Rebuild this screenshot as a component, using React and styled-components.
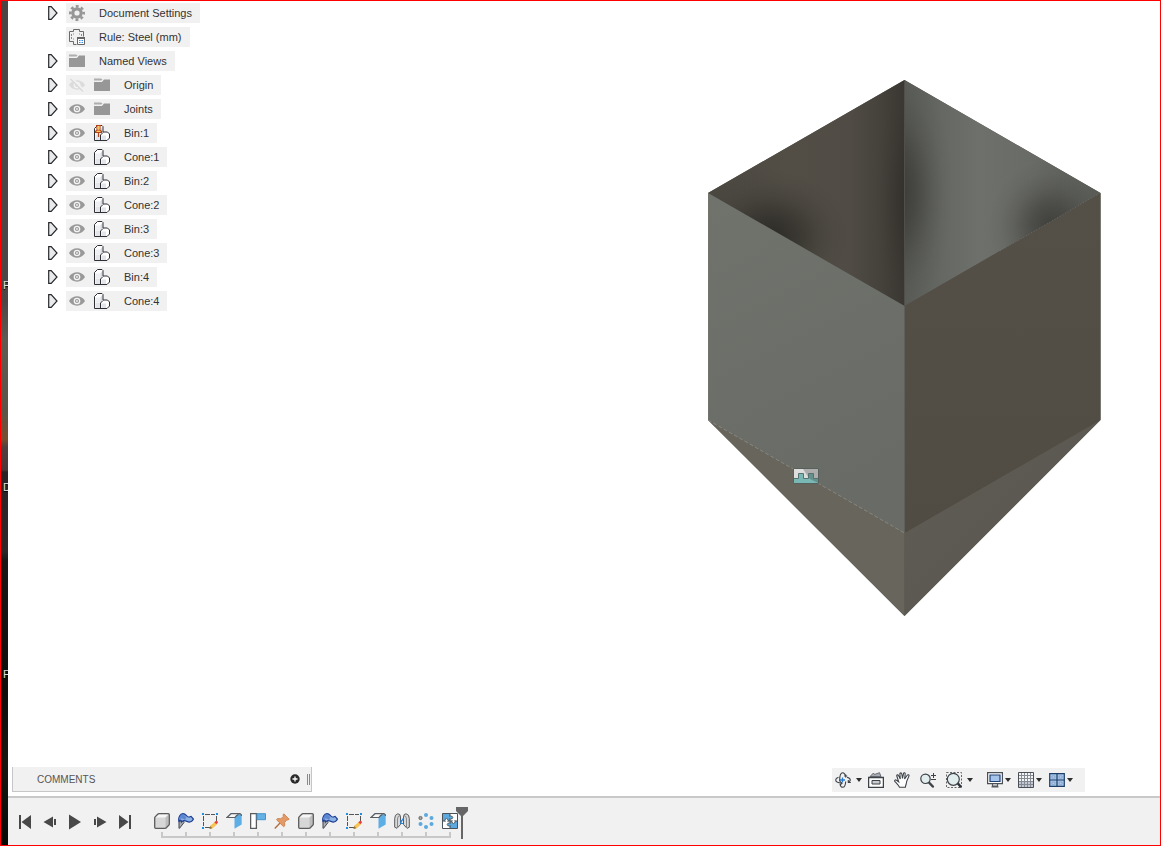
import React, { useState } from "react";
import styled, { createGlobalStyle } from "styled-components";

const TREE = [
    { label: 'Document Settings', icon: 'gear', expandable: true },
    { label: 'Rule: Steel (mm)', icon: 'rule' },
    { label: 'Named Views', icon: 'folder', expandable: true },
    { label: 'Origin', icon: 'folder', expandable: true, eye: 'hidden' },
    { label: 'Joints', icon: 'folder', expandable: true, eye: 'visible' },
    { label: 'Bin:1', icon: 'grounded', expandable: true, eye: 'visible' },
    { label: 'Cone:1', icon: 'component', expandable: true, eye: 'visible' },
    { label: 'Bin:2', icon: 'component', expandable: true, eye: 'visible' },
    { label: 'Cone:2', icon: 'component', expandable: true, eye: 'visible' },
    { label: 'Bin:3', icon: 'component', expandable: true, eye: 'visible' },
    { label: 'Cone:3', icon: 'component', expandable: true, eye: 'visible' },
    { label: 'Bin:4', icon: 'component', expandable: true, eye: 'visible' },
    { label: 'Cone:4', icon: 'component', expandable: true, eye: 'visible' },
];

const PLAYER = [
    { label: 'Go to start', icon: 'first' },
    { label: 'Step back', icon: 'back' },
    { label: 'Play', icon: 'play' },
    { label: 'Step forward', icon: 'forward' },
    { label: 'Go to end', icon: 'last' },
];

const FEATURES = [
    'box', 'sheet', 'sketch', 'flange', 'unfold', 'pin', 'box',
    'sheet', 'sketch', 'flange', 'joint', 'pattern', 'puzzle',
];

const NAV = [
    { label: 'Orbit', icon: 'orbit', menu: true, gap: 5, after: 6 },
    { label: 'Look At', icon: 'lookAt', after: 10 },
    { label: 'Pan', icon: 'hand', after: 10 },
    { label: 'Zoom', icon: 'zoom', after: 10 },
    { label: 'Fit', icon: 'fit', menu: true, gap: 5, after: 14 },
    { label: 'Display Settings', icon: 'monitor', menu: true, gap: 2, after: 7 },
    { label: 'Grid and Snaps', icon: 'grid', menu: true, gap: 2, after: 7 },
    { label: 'Viewports', icon: 'viewports', menu: true, gap: 2, after: 0 },
];

const blocks = (
    <>
        <path d="M.5 15.5V4L3.5.5h5l.5 1V7h4.5l2 2v4L13 15.5z" fill="#fff" />
        <path d="M1.500 9.500H6V15H1.500zM7.500 10.500H12V15H7.500z" fill="#e3e5ea" />
        <path d="M1.500 4.500H6V9H1.500z" fill="#eeeff2" />
        <path d="M6.500 4.500l2-3V7l-2 2.500z" fill="#d3d6dd" />
        <path d="M.5 15.500V3.500L3.500.5h4.500l1 1V7h4.500l2 2v4L13 15.500zM6.500 15.500V10L9 7.500" fill="none" stroke="#2e3036" />
    </>
);

const ICONS = {
    gear: (
        <g fill="none" stroke="#969696">
            <circle cx="8" cy="8" r="4.200" strokeWidth="3.200" />
            <circle cx="8" cy="8" r="6.700" strokeWidth="2.600" strokeDasharray="2.860 2.400" strokeDashoffset="1.430" />
        </g>
    ),
    rule: (
        <g fill="none" stroke="#6b6b6b">
            <path d="M7.500 15.500h-3v-3h-4v-10h4v-2h6v2h4v5" />
            <path d="M4.500 4.500v1M4.500 9.500v1M10.500 4.500v1M2.500 5v5M12.500 5v2" stroke="#8a8a8a" strokeDasharray="2 1" />
            <path d="M8.500 8.500h7v7h-7z" fill="#fff" stroke="#666" />
            <path d="M8 9h8" stroke="#666" strokeWidth="2" />
            <path d="M10 11.500h1.500M12.500 11.500H14M10 13.500h1.500M12.500 13.500H14" stroke="#2f8ede" />
        </g>
    ),
    folder: (
        <g fill="#979797">
            <path d="M0 1.500h7l1.500 1-1 1H0z" opacity=".75" />
            <path d="M0 5h8l2-2.500h6V14H0z" />
        </g>
    ),
    visible: (
        <>
            <path d="M0 8C3.500 1.800 12.500 1.800 16 8 12.500 14.200 3.500 14.200 0 8z" fill="#999" />
            <circle cx="8" cy="8" r="2.700" fill="#999" stroke="#f4f4f4" strokeWidth="1.300" />
            <circle cx="8" cy="8" r=".9" fill="#f4f4f4" />
        </>
    ),
    hidden: (
        <>
            <path d="M0 8C3.500 1.800 12.500 1.800 16 8 12.500 14.200 3.500 14.200 0 8z" fill="#dcdcdc" />
            <circle cx="8" cy="8" r="2.700" fill="#dcdcdc" stroke="#f4f4f4" strokeWidth="1.300" />
            <path d="M2 1l13 13" stroke="#f1f1f1" strokeWidth="3" />
            <path d="M1.500 2l12.500 12.500" stroke="#d8d8d8" strokeWidth="1.300" />
        </>
    ),
    component: blocks,
    grounded: (
        <>
            {blocks}
            <path d="M2 .5h5M3 1v3.500M6 1v3.500M1.500 7.500v-1L3 5h3l1.500 1.500v1z" fill="#ffc65c" stroke="#b3431a" strokeWidth="1.200" />
            <path d="M3.600 1.200h1.800v3.300H3.600z" fill="#ffc65c" />
            <path d="M4.500 8v4" stroke="#b3431a" strokeWidth="1.200" />
        </>
    ),
    first: <path d="M2 1h2v14H2zM14 1v14L4.500 8z" />,
    back: <path d="M11 2.500v11L1.500 8zM12 5h2v6h-2z" />,
    play: <path d="M2 .5v15L14 8z" />,
    forward: <path d="M5 2.500v11L14.500 8zM2 5h2v6H2z" />,
    last: <path d="M12 1h2v14h-2zM2 1v14l9.500-7z" />,
    box: (
        <>
            <path d="M.7 4.700L4.500.7h10.800v10.600l-4 4H.7z" fill="#d7d7d7" />
            <path d="M1.500 4.500L4.700 1.300h9.800l-3.200 3.200z" fill="#f6f6f6" />
            <path d="M11.500 4.800l3.200-3.300v9.700l-3.200 3.300z" fill="#bdbdbd" />
            <path d="M.7 5q0-.8.6-1.400L3.700 1.300Q4.300.7 5 .7h9.300q1 0 1 1V11q0 .7-.6 1.300l-2.400 2.400q-.6.6-1.300.6H1.700q-1 0-1-1z" fill="none" stroke="#5b5b5b" strokeWidth="1.300" />
        </>
    ),
    sheet: (
        <>
            <path d="M1 8.500L5.500 7.500 6 9.500 1.500 15.300H1z" fill="#a9adb4" stroke="#41454d" />
            <path d="M.8 8C.3 4 2 .9 5 .7c3 0 3.500 2.800 5.500 3.300 1 .2 1.700-.6 2.500-.6L15.500 6c-1.500 2.800-4 3.600-6.500 2.400C7 7.300 5 7 3.500 9 3.500 7 2 6.500.8 8z" fill="#8fb2e6" stroke="#1d3f92" strokeWidth="1.200" />
            <path d="M1.500 6C1.500 3 3 1.500 5 1.500c2 .2 2.500 2 3.500 3L7 7C5.500 5.500 3.500 5 1.500 6z" fill="#5c86d2" />
        </>
    ),
    sketch: (
        <>
            <path d="M3 1.500h10M1.500 3v10M14.500 3v6M3 14.500h5" stroke="#555" strokeDasharray="5 1" />
            <path d="M0 0h2v2H0zM14 0h2v2h-2zM0 14h2v2H0z" fill="#1a8fe8" />
            <path d="M7.500 16l.8-3.200 4.400-3.900 2.300 2.300-4.300 4z" fill="#f7c450" />
            <path d="M7.500 16l.8-3 1.900 2.200z" fill="#8b6d40" />
            <path d="M12.300 9.200l1.500-1.300q1-.5 1.700.3t.3 1.600l-1.400 1.400z" fill="#e8413e" />
        </>
    ),
    flange: (
        <>
            <path d="M1 4.500L5 .7h9L9.500 4.500z" fill="#f7f7f7" />
            <path d="M8.500 5.500Q10 2 13 1q2.700-.5 2.700 2v8.500L8.500 15.800z" fill="#5eaee6" />
            <path d="M15.500 3Q15.500.7 13.500.7H5L1 4.500h8Q10 2.500 12.500 1.500" fill="none" stroke="#5a5f64" strokeWidth="1.200" />
        </>
    ),
    unfold: (
        <>
            <path d="M.6 .7h5.800v14.600H.6z" fill="#fff" stroke="#5b5b5b" strokeWidth="1.300" />
            <path d="M7 .7h8.500v6H7z" fill="#65b1e6" stroke="#4494cc" />
        </>
    ),
    pin: (
        <>
            <path d="M.8 15.500L6 10" stroke="#b46a3c" strokeWidth="1.300" />
            <path d="M9.800.8l5.400 5.400-1.400.9-.9-.3-2.300 2.700.2 3.200-1.200 1L2.500 6.700l1-1.200 3.300.2 2.700-2.300-.5-1.400z" fill="#e39a66" stroke="#c87a45" strokeWidth=".8" />
        </>
    ),
    joint: (
        <>
            <path d="M.7 5.500Q.7 1.500 3.800.8 6.500.8 6.500 4v7.500L3 15.300.7 14.200z" fill="#d9d9d9" stroke="#5b5b5b" />
            <path d="M9.500 4Q9.500.8 12 .8q3.300.5 3.300 4.700v8.700L13 15.300l-3.500-3.800z" fill="#d9d9d9" stroke="#5b5b5b" />
            <path d="M3.500 15V6Q3.500 3 6 2.500M12.500 15V6q0-3-2.500-3.500" fill="none" stroke="#888" />
            <path d="M6.500 10l3-5M7 7v3.500h2" fill="none" stroke="#2186dd" strokeWidth="1.200" />
        </>
    ),
    pattern: (
        <g fill="#5ba9de">
            <circle cx="8" cy="2" r="2" />
            <circle cx="13.500" cy="5" r="2" />
            <circle cx="13.500" cy="11" r="2" />
            <circle cx="8" cy="14" r="2" />
            <circle cx="2.500" cy="11" r="2" />
            <circle cx="2.500" cy="5" r="1.600" fill="#a5a5a5" stroke="#666" />
        </g>
    ),
    puzzle: (
        <>
            <path d="M.5.500h15v15H.5z" fill="#fff" />
            <path d="M.5.500H8V8H.5zM8 8h7.500v7.500H8z" fill="#5ba9de" />
            <path d="M.5.500h15v15H.5zM8 .5v15M.5 8h15" fill="none" stroke="#4c5257" />
            <g stroke="#4c5257" strokeWidth=".9">
                <path d="M7.500 3h1q2.300 0 2.300 1.500T8.500 6h-1zM8.500 10h-1q-2.300 0-2.300 1.500T7.500 13h1z" fill="#5ba9de" />
                <path d="M3 8.500v-1q0-2 1.500-2T6 7.500v1zM10 7.500v1q0 2 1.500 2T13 8.500v-1z" fill="#fff" />
            </g>
            <path d="M7 3.500h1.500v2H7zM7.500 10.500H9v2H7.500z" fill="#5ba9de" />
            <path d="M3.500 7.500h2V9h-2zM10.500 7h2v1.500h-2z" fill="#fff" />
        </>
    ),
    orbit: (
        <g fill="none" stroke="#3d4248" strokeWidth="1.100">
            <path d="M4.700 9.500V8C4.700 3.500 5.700.7 7.700.7c1.300 0 2.300 1.200 2.800 3.200M10.700 9.500c-.2 3.500-1.300 5.800-3 5.800-1.300 0-2.200-1-2.700-3" />
            <path d="M3.500 5.300C1.700 5.900.7 6.900.7 8c0 1.800 2.500 3 6 3.200M12 5.300c2.200.6 3.300 1.500 3.300 2.700 0 .8-.6 1.500-1.800 2.100" />
            <path d="M5 9.500l2 1.700-2 1.800M13.300 8v2.500h2.500" />
            <path d="M7.500 5.500v5M5 8h5" stroke="#2879d0" strokeWidth="1.300" />
            <path d="M10.700 2.500v3M9.200 4h3" />
        </g>
    ),
    lookAt: (
        <>
            <path d="M2 4.500L5.500 1l1 1.500L11.500.7l1.500 4z" fill="#a9adb3" stroke="#666c73" />
            <path d="M.6 5.500h14.800v9.900H.6z" fill="#fff" stroke="#3d4248" strokeWidth="1.300" />
            <path d="M4 8.500h8V12H4z" fill="#c9ccd0" stroke="#3d4248" />
        </>
    ),
    hand: (
        <path
            d="M5.500 15.300C4.500 12.800 2.300 11 .8 9.300c-.6-1 .6-1.900 1.700-1l2.200 1.500L2.800 4c-.3-1.300 1.200-1.700 1.700-.5L6.300 7 5.900 2c0-1.500 1.600-1.500 1.900 0l.7 4.500L9.500 1.600c.3-1.300 1.800-1 1.700.4l-.6 5 2.600-3.700c.8-1.100 2.200-.5 1.700.8l-2.200 5.200c-.2 2.500-1 3.400-1.400 6z"
            fill="#fff" stroke="#3d4248" strokeWidth="1.100"
        />
    ),
    zoom: (
        <>
            <path d="M8.500 10l4.300 4.500" stroke="#3d4248" strokeWidth="2.500" strokeLinecap="round" />
            <circle cx="5.500" cy="6.800" r="4.700" fill="#e2eeee" stroke="#3d4248" strokeWidth="1.200" />
            <path d="M11 3.500h5M13.500 1v5M11 7.500h5" stroke="#3d4248" />
        </>
    ),
    fit: (
        <>
            <path d="M.5.500h15v15H.5z" fill="none" stroke="#666" strokeDasharray="2 1.500" />
            <path d="M11.500 11l3 3.500" stroke="#2e3338" strokeWidth="2.500" strokeLinecap="round" />
            <circle cx="7.300" cy="7.300" r="6" fill="#e2eeee" stroke="#3d4248" strokeWidth="1.200" />
        </>
    ),
    monitor: (
        <>
            <path d="M.6.700h14.800v11H.6z" fill="#fff" stroke="#4a4f55" strokeWidth="1.200" />
            <path d="M3 3h10v6.500H3z" fill="#a5c4ea" stroke="#1f3f77" strokeWidth="1.200" />
            <path d="M5.500 12v2h5v-2M4.500 14.900h7" fill="none" stroke="#555a60" strokeWidth="1.200" />
        </>
    ),
    grid: (
        <>
            <path d="M.5.500h15v15H.5z" fill="#f4f5f7" />
            <path d="M.5 9h15v6.500H.5z" fill="#c3c8d4" />
            <path d="M3.500 0v16M6.500 0v16M9.500 0v16M12.500 0v16M0 3.500h16M0 6.500h16M0 9.500h16M0 12.500h16" stroke="#858a93" />
            <path d="M.5.500h15v15H.5z" fill="none" stroke="#4a4f55" />
        </>
    ),
    viewports: (
        <>
            <path d="M.7 1.700h14.600v12.600H.7z" fill="#a5c4ea" stroke="#1f3f66" strokeWidth="1.200" />
            <path d="M8 1.500v13M.5 8h15" stroke="#1f3f66" strokeWidth="1.200" />
            <path d="M3 4h2.800v2H3zM10.200 4H13v2h-2.800zM3 10.200h2.800v2H3zM10.200 10.200H13v2h-2.800z" fill="#c9dcf4" stroke="#7f9dc4" strokeWidth=".8" />
        </>
    ),
};

const Icon = ({ name }) => (
    <Glyph viewBox="0 0 16 16" aria-hidden="true">{ICONS[name]}</Glyph>
)

const TreeRow = ({ item }) => {
    const [ visible, setVisible ] = useState(item.eye === 'visible');

    return (
        <Row>
            { item.expandable ?
                <Expander aria-label={`Expand ${item.label}`}>
                    <svg width="10" height="14" viewBox="0 0 10 14" aria-hidden="true">
                        <path d="M.7.700h2.500L9 7l-5.800 6.300H.7z" fill="#e9eaec" stroke="#26282b" strokeWidth="1.200" />
                    </svg>
                </Expander>
                : <ExpanderSpace />
            }
            <Node>
                { item.eye &&
                    <EyeButton
                        aria-label={`Toggle ${item.label}`}
                        aria-pressed={visible}
                        onClick={() => setVisible(!visible)}
                    >
                        <Icon name={visible ? 'visible' : 'hidden'} />
                    </EyeButton>
                }
                <Icon name={item.icon} />
                <NodeLabel>{item.label}</NodeLabel>
            </Node>
        </Row>
    )
}

const BinModel = () => (
    <Model viewBox="708 79 393 538" role="img" aria-label="Bin with cone">
        <defs>
            <linearGradient id="backLeft" x1="0" x2="1" y1="0" y2="0">
                <stop offset="0" stopColor="#4a4740" />
                <stop offset=".4" stopColor="#524e46" />
                <stop offset=".72" stopColor="#504c45" />
                <stop offset=".88" stopColor="#45413b" />
                <stop offset="1" stopColor="#3a3631" />
            </linearGradient>
            <linearGradient id="backRight" x1="0" x2="1" y1="0" y2="0">
                <stop offset="0" stopColor="#595b56" />
                <stop offset=".2" stopColor="#666863" />
                <stop offset=".38" stopColor="#6e706b" />
                <stop offset=".65" stopColor="#696b66" />
                <stop offset="1" stopColor="#5a5c57" />
            </linearGradient>
            <radialGradient id="shade">
                <stop offset="0" stopColor="#22211e" stopOpacity=".75" />
                <stop offset=".3" stopColor="#22211e" stopOpacity=".52" />
                <stop offset=".6" stopColor="#22211e" stopOpacity=".2" />
                <stop offset=".8" stopColor="#22211e" stopOpacity=".06" />
                <stop offset="1" stopColor="#22211e" stopOpacity="0" />
            </radialGradient>
            <linearGradient id="frontLeft" x1="0" x2=".3" y1="0" y2="1">
                <stop offset="0" stopColor="#70726c" />
                <stop offset="1" stopColor="#696b66" />
            </linearGradient>
            <linearGradient id="frontRight" x1="0" x2="0" y1="0" y2="1">
                <stop offset="0" stopColor="#544f47" />
                <stop offset="1" stopColor="#504c44" />
            </linearGradient>
            <linearGradient id="coneRight" x1="0" x2=".5" y1="0" y2=".5">
                <stop offset="0" stopColor="#605d55" />
                <stop offset="1" stopColor="#5c5952" />
            </linearGradient>
            <clipPath id="clipLeft"><path d="M708 193L904.500 80v226z" /></clipPath>
            <clipPath id="clipRight"><path d="M904.500 80l196 113-196 113z" /></clipPath>
        </defs>
        <path d="M708 193L904.500 80l196 113v227l-196 196L708 420z" fill="#59564e" />
        <path d="M708 193L904.500 80v226z" fill="url(#backLeft)" />
        <g clipPath="url(#clipLeft)">
            <ellipse cx="772" cy="236" rx="78" ry="66" fill="url(#shade)" />
            <ellipse cx="908" cy="200" rx="36" ry="110" fill="url(#shade)" opacity=".35" />
        </g>
        <path d="M904.500 80l196 113-196 113z" fill="url(#backRight)" />
        <g clipPath="url(#clipRight)">
            <ellipse cx="900" cy="192" rx="54" ry="120" fill="url(#shade)" opacity=".7" />
            <ellipse cx="1050" cy="226" rx="62" ry="66" fill="url(#shade)" opacity=".75" />
        </g>
        <path d="M708 420l196.500 113v83z" fill="#68655d" />
        <path d="M1100.500 420l-196 113v83z" fill="url(#coneRight)" />
        <path d="M708 193l196.500 113v227L708 420z" fill="url(#frontLeft)" />
        <path d="M1100.500 193l-196 113v227l196-113z" fill="url(#frontRight)" />
        <path d="M904.500 306v227" stroke="#5f605a" />
        <path d="M904.500 80v226" stroke="#514f49" />
        <path d="M708 420l196.500 113" stroke="#96938a" strokeDasharray="4 2" strokeWidth=".7" />
        <path d="M1000 251l100-58" stroke="#7a7a73" strokeDasharray="1 2" strokeWidth=".6" />
        <path d="M708.500 193v227M1100.500 193v227" stroke="#77776f" strokeWidth=".6" />
        <path d="M793.500 468.500h25v15h-25z" fill="#dedede" />
        <path d="M803 469h15v14h-6z" fill="#adadad" />
        <path d="M794 478.500h4.500v-5h5v5h5v-5h5v5h4.500v4.500h-24z" fill="#79b8b5" />
        <path d="M809 478.500v-5h4.500v5h4.500v4.500z" fill="#64918d" />
        <path d="M794 478.500h4.500v-5h5v5h5v-5h5v5h4.500" fill="none" stroke="#56716e" />
        <path d="M793.500 468.500h25v15h-25z" fill="none" stroke="#57605a" />
    </Model>
)

const App = () => {
    return (
        <>
            <GlobalStyle />
            <Frame>
                <DesktopEdge>
                    <DesktopText>F</DesktopText>
                    <DesktopText>D</DesktopText>
                    <DesktopText>F</DesktopText>
                </DesktopEdge>
                <Workspace>
                    <Stage>
                        <Browser>
                            { TREE.map((item) => <TreeRow key={item.label} item={item} />) }
                        </Browser>
                        <Canvas>
                            <BinModel />
                        </Canvas>
                    </Stage>
                    <Dock>
                        <Comments>
                            <CommentsTitle>COMMENTS</CommentsTitle>
                            <AddButton aria-label="Add comment">
                                <svg width="10" height="10" viewBox="0 0 10 10" aria-hidden="true">
                                    <circle cx="5" cy="5" r="4.700" fill="#2a2a2a" />
                                    <path d="M5 2.500v5M2.500 5h5" stroke="#fff" strokeWidth="1.300" />
                                </svg>
                            </AddButton>
                            <Grip />
                        </Comments>
                        <NavBar>
                            { NAV.map(({ label, icon, menu, gap, after }) => (
                                <NavButton key={label} aria-label={label} $gap={gap} $after={after}>
                                    <Icon name={icon} />
                                    { menu &&
                                        <svg width="6" height="4" viewBox="0 0 6 4" aria-hidden="true">
                                            <path d="M0 0h6L3 4z" fill="#2d2d2d" />
                                        </svg>
                                    }
                                </NavButton>
                            ))}
                        </NavBar>
                    </Dock>
                    <Timeline>
                        <Player>
                            { PLAYER.map(({ label, icon }) => (
                                <PlayerButton key={label} aria-label={label}>
                                    <Icon name={icon} />
                                </PlayerButton>
                            ))}
                        </Player>
                        <History>
                            <FeatureList>
                                { FEATURES.map((name, i) => (
                                    <FeatureButton key={i} aria-label={name}>
                                        <Icon name={name} />
                                    </FeatureButton>
                                ))}
                            </FeatureList>
                            <Track>
                                { FEATURES.map((name, i) => <Tick key={i} />) }
                            </Track>
                        </History>
                        <Marker viewBox="0 0 12 32" aria-hidden="true">
                            <path d="M0 0h12v4L7 9v23H5V9L0 4z" fill="#666" />
                        </Marker>
                    </Timeline>
                </Workspace>
            </Frame>
        </>
    )
}

export default App;


const GlobalStyle = createGlobalStyle`
    * {
        box-sizing: border-box;
    }

    body {
        margin: 0;
        background: #fff;
        font-family: "Liberation Sans", Arial, sans-serif;
        font-size: 11px;
        color: #333;
    }

    button {
        border: 0;
        padding: 0;
        background: none;
        font: inherit;
        color: inherit;
        cursor: pointer;
    }
`

const Frame = styled.div`
    display: flex;
    min-height: 100vh;
    border: 1px solid #f00;
`

const DesktopEdge = styled.aside`
    flex: none;
    display: grid;
    grid-template-rows: 202px 187px 24px;
    align-content: start;
    width: 7px;
    padding: 276px 0 0 2px;
    overflow: hidden;
    background: linear-gradient(
        #4a4444 0, #4d4647 300px, #5e5c52 340px, #5a5448 410px,
        #7a4e30 438px, #53403d 446px, #4a3838 469px, #2c2226 471px,
        #2e2729 550px, #171716 560px, #0d0d0a 690px, #15170f 760px, #070906 100%
    );
`

const DesktopText = styled.span`
    line-height: 16px;
    color: #e0e0e0;
    text-shadow: 0 1px 1px #000;
`

const Workspace = styled.main`
    flex: 1;
    min-width: 0;
    display: flex;
    flex-direction: column;
`

const Stage = styled.div`
    flex: 1;
    display: flex;
    justify-content: space-between;
`

const Browser = styled.ul`
    list-style: none;
    margin: 0;
    padding: 0 0 0 40px;
`

const Row = styled.li`
    display: flex;
    align-items: center;
    height: 24px;
`

const Expander = styled.button`
    display: flex;
    width: 18px;
`

const ExpanderSpace = styled.span`
    width: 18px;
`

const Node = styled.div`
    display: flex;
    align-items: center;
    gap: 9px;
    height: 20px;
    padding: 0 8px 0 3px;
    background: #f1f1f1;
`

const EyeButton = styled.button`
    display: flex;
`

const NodeLabel = styled.span`
    padding-left: 5px;
    line-height: 20px;
    white-space: nowrap;
`

const Glyph = styled.svg`
    flex: none;
    display: block;
    width: 16px;
    height: 16px;
`

const Canvas = styled.div`
    padding: 78px 59px 0 0;
`

const Model = styled.svg`
    display: block;
    width: 393px;
    height: 538px;
`

const Dock = styled.div`
    display: flex;
    justify-content: space-between;
    align-items: flex-end;
    padding: 0 75px 4px 4px;
`

const Comments = styled.section`
    display: flex;
    align-items: center;
    width: 300px;
    height: 25px;
    padding-left: 24px;
    background: #f1f1f1;
    border: solid #c6c6c6;
    border-width: 0 1px 1px;
`

const CommentsTitle = styled.span`
    flex: 1;
    font-size: 10px;
    color: #555;
`

const AddButton = styled.button`
    display: flex;
    margin-right: 7px;
`

const Grip = styled.span`
    width: 3px;
    height: 11px;
    margin-right: 1px;
    border: solid #888;
    border-width: 0 1px;
`

const NavBar = styled.nav`
    display: flex;
    align-items: center;
    height: 24px;
    padding: 0 12px 0 3px;
    background: #f1f1f1;
`

const NavButton = styled.button`
    display: flex;
    align-items: center;
    gap: ${({ $gap = 0 }) => $gap}px;
    margin-right: ${({ $after }) => $after}px;
`

const Timeline = styled.footer`
    display: flex;
    height: 49px;
    padding-left: 9px;
    background: #f1f1f1;
    border-top: 2px solid #c8c8c8;
`

const Player = styled.div`
    display: flex;
    align-items: center;
    gap: 9px;
    width: 133px;
`

const PlayerButton = styled.button`
    display: flex;
    fill: #484848;
`

const History = styled.div`
    padding-top: 13px;
`

const FeatureList = styled.div`
    display: flex;
`

const FeatureButton = styled.button`
    display: flex;
    justify-content: center;
    width: 24px;
    padding: 2px 0;
`

const Track = styled.div`
    display: flex;
    justify-content: space-between;
    height: 6px;
    margin: 1px 11px 0;
    border-bottom: 2px solid #c8c8c8;
`

const Tick = styled.span`
    width: 2px;
    background: #c8c8c8;
`

const Marker = styled.svg`
    width: 12px;
    height: 32px;
    margin: 9px 0 0 -6px;
`
